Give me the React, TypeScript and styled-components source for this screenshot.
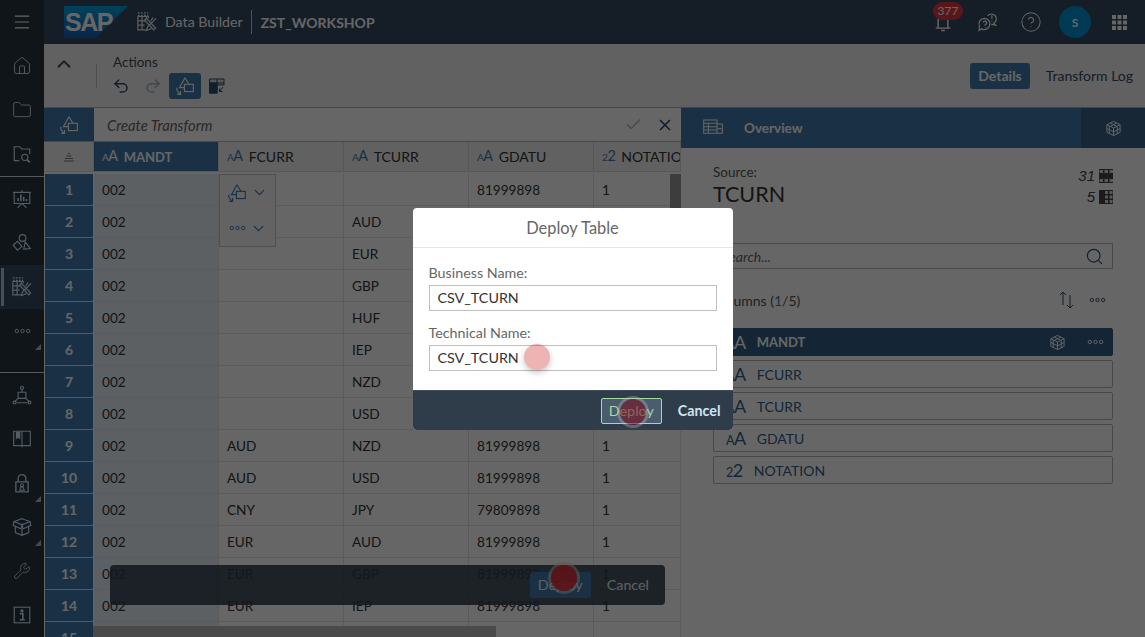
import { ReactNode } from "react";
import styled, { createGlobalStyle } from "styled-components";
import {
  Check,
  ChevronDown,
  ChevronUp,
  CircleHelp,
  Folder,
  Home,
  Menu,
  Redo2,
  Search,
  Undo2,
  Wrench,
  X,
} from "lucide-react";

const FONT = `Lato, "Noto Sans", "Liberation Sans", sans-serif`;

const GlobalStyle = createGlobalStyle`
  html, body {
    margin: 0;
    height: 100%;
    overflow: hidden;
    background: #fff;
    font-family: ${FONT};
    color: #333;
  }
  * { box-sizing: border-box; }
`;

const Page = styled.div`
  position: relative;
  width: 1145px;
  height: 637px;
  overflow: hidden;
  display: flex;
  flex-direction: column;
`;

/* shell header */
const ShellBar = styled.header`
  height: 44px;
  flex: none;
  display: flex;
  align-items: center;
  background: #354a5f;
  color: #fff;
`;

const ShellMenu = styled.div`
  width: 44px;
  height: 44px;
  flex: none;
  display: flex;
  align-items: center;
  justify-content: center;
  background: #27363f;
  color: #fff;
`;

const Logo = styled.svg`
  margin-left: 20px;
  flex: none;
`;

const AppGlyph = styled.span`
  margin-left: 8px;
  display: flex;
  color: #e4ecf3;
`;

const AppName = styled.span`
  font-size: 14.2px;
  margin-left: 7px;
  padding-right: 8px;
  height: 24px;
  line-height: 24px;
  border-right: 1px solid #c9d2da;
  color: #fff;
`;

const SpaceName = styled.span`
  font-size: 14px;
  font-weight: 700;
  margin-left: 9px;
`;

const ShellActions = styled.div`
  margin-left: auto;
  margin-right: 4px;
  display: flex;
  align-items: center;
`;

const ShellIcon = styled.div`
  position: relative;
  width: 44px;
  height: 44px;
  display: flex;
  align-items: center;
  justify-content: center;
`;

const Badge = styled.span`
  position: absolute;
  top: 2px;
  left: 12px;
  height: 18px;
  min-width: 30px;
  padding: 0 4px;
  border-radius: 9px;
  background: #e03a3f;
  color: #fff;
  font-size: 12px;
  line-height: 18px;
  text-align: center;
`;

const Avatar = styled.div`
  width: 32px;
  height: 32px;
  margin: 0 6px;
  border-radius: 50%;
  background: #0092d1;
  color: #fff;
  font-size: 12px;
  font-weight: 700;
  display: flex;
  align-items: center;
  justify-content: center;
`;

/* body */
const Body = styled.div`
  flex: 1;
  display: flex;
  min-height: 0;
`;

const SideNav = styled.nav`
  width: 44px;
  flex: none;
  display: flex;
  flex-direction: column;
  background: #27363f;
  color: #d1e8ff;
`;

const NavItem = styled.div<{ $active?: boolean; $more?: boolean }>`
  position: relative;
  height: 44px;
  flex: none;
  display: flex;
  align-items: center;
  justify-content: center;
  background: ${(p) => (p.$active ? "#354a5f" : "transparent")};
  ${(p) =>
    p.$active
      ? `&::before {
          content: "";
          position: absolute;
          left: 1px;
          top: 3px;
          bottom: 3px;
          width: 3px;
          background: #b9c4cf;
        }`
      : ""}
  ${(p) =>
    p.$more
      ? `&::after {
          content: "";
          position: absolute;
          right: 3px;
          bottom: 3px;
          border-style: solid;
          border-width: 0 0 6px 6px;
          border-color: transparent transparent #aebcc7 transparent;
        }`
      : ""}
`;

const NavDivider = styled.div<{ $gap?: number }>`
  height: 1px;
  flex: none;
  margin-top: ${(p) => p.$gap ?? 0}px;
  background: #d8dee3;
`;

const Workspace = styled.main`
  flex: 1;
  display: flex;
  flex-direction: column;
  min-width: 0;
  background: #fff;
`;

const Toolbar = styled.div`
  height: 64px;
  flex: none;
  display: flex;
  align-items: flex-start;
  background: #f2f2f2;
  border-bottom: 1px solid #b4b4b4;
`;

const Collapse = styled.div`
  width: 40px;
  height: 40px;
  display: flex;
  align-items: center;
  justify-content: center;
  color: #354a5f;
`;

const ToolSep = styled.div`
  width: 1px;
  height: 24px;
  margin: 20px 16px 0 12px;
  background: #c5c5c5;
`;

const ToolGroup = styled.div`
  display: flex;
  flex-direction: column;
  padding-top: 10px;
`;

const ToolLabel = styled.span`
  font-size: 13.5px;
  line-height: 16px;
  color: #4a4a4a;
`;

const ToolButtons = styled.div`
  display: flex;
  align-items: center;
  margin-left: -8px;
  margin-top: 3px;
`;

const ToolButton = styled.div<{ $on?: boolean; $off?: boolean }>`
  width: 32px;
  height: 26px;
  display: flex;
  align-items: center;
  justify-content: center;
  border-radius: 3px;
  background: ${(p) => (p.$on ? "#427cac" : "transparent")};
  color: ${(p) => (p.$on ? "#fff" : p.$off ? "#9fb2c2" : "#2c4e6c")};
`;

const ViewTabs = styled.div`
  margin-left: auto;
  margin-top: 19px;
  margin-right: 12px;
  display: flex;
  align-items: center;
  gap: 16px;
`;

const ViewTab = styled.span<{ $on?: boolean }>`
  height: 26px;
  line-height: 26px;
  font-size: 14px;
  padding: ${(p) => (p.$on ? "0 8px" : "0")};
  border-radius: 3px;
  background: ${(p) => (p.$on ? "#427cac" : "transparent")};
  color: ${(p) => (p.$on ? "#fff" : "#354a5f")};
  font-weight: ${(p) => (p.$on ? 700 : 400)};
`;

const Split = styled.div`
  flex: 1;
  display: flex;
  min-height: 0;
`;

const LeftPane = styled.section`
  position: relative;
  width: 637px;
  flex: none;
  display: flex;
  flex-direction: column;
  overflow: hidden;
`;

const TransformBar = styled.div`
  height: 34px;
  flex: none;
  display: flex;
  align-items: center;
  background: #fff;
  border-bottom: 1px solid #b4b4b4;
`;

const TransformIcon = styled.div`
  width: 50px;
  height: 33px;
  flex: none;
  display: flex;
  align-items: center;
  justify-content: center;
  background: #427cac;
  color: #fff;
`;

const TransformInput = styled.span`
  flex: 1;
  padding-left: 13px;
  font-size: 14.8px;
  font-style: italic;
  color: #666;
`;

const BarAction = styled.span<{ $muted?: boolean }>`
  width: 32px;
  display: flex;
  justify-content: center;
  color: ${(p) => (p.$muted ? "#a9bccb" : "#2c4e6c")};
`;

const Grid = styled.div`
  flex: 1;
  display: grid;
  grid-template-columns: 50px 125px 125px 125px 125px 87px;
  grid-auto-rows: 32px;
  align-content: start;
  overflow: hidden;
  background: #fff;
`;

const HeadCell = styled.div<{ $on?: boolean }>`
  height: 30px;
  display: flex;
  align-items: center;
  gap: 6px;
  padding-left: 8px;
  white-space: nowrap;
  overflow: hidden;
  font-size: ${(p) => (p.$on ? 13 : 14)}px;
  border-right: 1px solid #d9d9d9;
  border-bottom: 1px solid #d9d9d9;
  background: ${(p) => (p.$on ? "#427cac" : "#f2f2f2")};
  color: ${(p) => (p.$on ? "#fff" : "#333")};
  font-weight: ${(p) => (p.$on ? 700 : 400)};
`;

const CornerCell = styled(HeadCell)`
  justify-content: center;
  padding-left: 0;
  color: #777;
`;

const RowNo = styled.div`
  display: flex;
  align-items: center;
  justify-content: center;
  margin-left: 1px;
  margin-right: 1px;
  font-size: 14px;
  font-weight: 700;
  background: #427cac;
  color: #fff;
  border-bottom: 1px solid #d4e0ea;
`;

const Cell = styled.div<{ $on?: boolean }>`
  display: flex;
  align-items: center;
  padding-left: 8px;
  font-size: 13.6px;
  color: #333;
  border-right: 1px solid #e3e3e3;
  border-bottom: 1px solid #e3e3e3;
  background: ${(p) => (p.$on ? "#e5f0f8" : "#fff")};
`;

const TypeMark = styled.span<{ $size?: number }>`
  display: inline-flex;
  align-items: baseline;
  font-weight: 400;
  font-size: ${(p) => p.$size ?? 14.5}px;
  line-height: 1;
  color: inherit;
  letter-spacing: -0.5px;
  & small {
    font-size: 0.7em;
  }
`;

const HeadMark = styled(TypeMark)`
  color: #427cac;
`;

const ColumnMenu = styled.div`
  position: absolute;
  left: 175px;
  top: 66px;
  width: 57px;
  height: 73px;
  display: flex;
  flex-direction: column;
  background: #f7f7f7;
  border: 1px solid #c9c9c9;
  color: #427cac;
`;

const ColumnMenuRow = styled.div`
  flex: 1;
  display: flex;
  align-items: center;
  justify-content: center;
  gap: 4px;
`;

const VScroll = styled.div`
  position: absolute;
  right: 0;
  top: 66px;
  width: 11px;
  height: 90px;
  background: #9a9a9a;
`;

const HScroll = styled.div`
  position: absolute;
  left: 49px;
  bottom: 0;
  width: 403px;
  height: 11px;
  background: #b8b8b8;
`;

/* details panel */
const RightPane = styled.aside`
  flex: 1;
  display: flex;
  flex-direction: column;
  min-width: 0;
  background: #fff;
  box-shadow: -1px 0 3px rgba(0, 0, 0, 0.12);
`;

const PanelHead = styled.div`
  height: 40px;
  flex: none;
  display: flex;
  align-items: center;
  background: #427cac;
  color: #fff;
  padding-left: 20px;
  font-size: 13.5px;
  font-weight: 700;
  gap: 19px;
`;

const PanelTab = styled.div`
  margin-left: auto;
  width: 64px;
  height: 40px;
  background: #3c6186;
  display: flex;
  align-items: center;
  justify-content: center;
`;

const PanelBody = styled.div`
  padding: 16px 32px 0 32px;
  display: flex;
  flex-direction: column;
`;

const SourceRow = styled.div`
  display: flex;
  justify-content: space-between;
`;

const SourceLabel = styled.div`
  font-size: 13.5px;
  line-height: 17px;
  color: #555;
`;

const SourceName = styled.div`
  font-size: 21.5px;
  line-height: 26px;
  color: #333;
`;

const Counts = styled.div`
  display: flex;
  flex-direction: column;
  align-items: flex-end;
  padding-top: 4px;
  gap: 5px;
`;

const Count = styled.div`
  display: flex;
  align-items: center;
  gap: 4px;
  font-size: 15px;
  line-height: 16px;
  font-style: italic;
  color: #444;
  font-family: "Liberation Sans", sans-serif;
`;

const SearchBox = styled.div`
  margin-top: 36px;
  height: 26px;
  display: flex;
  align-items: center;
  justify-content: space-between;
  padding: 0 8px;
  border: 1px solid #b4b4b4;
  background: #fff;
  font-size: 14px;
  font-style: italic;
  color: #666;
  & svg {
    color: #2c4e6c;
  }
`;

const ColumnsHead = styled.div`
  margin-top: 20px;
  height: 22px;
  display: flex;
  align-items: center;
  font-size: 14px;
  color: #555;
`;

const ColumnsCount = styled.span`
  color: #427cac;
`;

const ColumnsActions = styled.div`
  margin-left: auto;
  display: flex;
  align-items: center;
  gap: 13px;
  padding-right: 7px;
  color: #354a5f;
`;

const ColumnList = styled.div`
  margin-top: 17px;
  display: flex;
  flex-direction: column;
  gap: 4px;
`;

const ColumnRow = styled.div<{ $on?: boolean }>`
  height: 28px;
  display: flex;
  align-items: center;
  gap: 11px;
  padding: 0 8px 0 12px;
  border-radius: 2px;
  font-size: ${(p) => (p.$on ? 13 : 14)}px;
  font-weight: ${(p) => (p.$on ? 700 : 400)};
  border: 1px solid ${(p) => (p.$on ? "#345f87" : "#b4b4b4")};
  background: ${(p) => (p.$on ? "#345f87" : "#fff")};
  color: ${(p) => (p.$on ? "#fff" : "#345f87")};
`;

const RowIcons = styled.div`
  margin-left: auto;
  display: flex;
  align-items: center;
  gap: 21px;
`;

/* bar behind the dim layer */
const DeployBar = styled.div`
  position: absolute;
  left: 110px;
  top: 565px;
  width: 555px;
  height: 40px;
  padding-right: 9px;
  border-radius: 4px;
  display: flex;
  align-items: center;
  justify-content: flex-end;
  gap: 9px;
  background: rgba(45, 62, 74, 0.88);
  color: #eaf1f7;
  font-size: 14.3px;
`;

const BarButton = styled.span<{ $primary?: boolean }>`
  height: 26px;
  line-height: 26px;
  padding: 0 ${(p) => (p.$primary ? 8 : 7)}px;
  border-radius: 3px;
  background: ${(p) => (p.$primary ? "#427cac" : "transparent")};
`;

const Dim = styled.div`
  position: absolute;
  inset: 0;
  background: rgba(0, 0, 0, 0.6);
  display: flex;
  align-items: center;
  justify-content: center;
`;

const Dialog = styled.div`
  width: 320px;
  height: 222px;
  margin-top: 1px;
  border-radius: 4px;
  overflow: hidden;
  display: flex;
  flex-direction: column;
  background: #fff;
`;

const DialogTitle = styled.div`
  height: 40px;
  flex: none;
  line-height: 39px;
  text-align: center;
  font-size: 16.4px;
  color: #666;
  border-bottom: 1px solid #e5e5e5;
`;

const DialogBody = styled.div`
  flex: 1;
  padding: 16px 16px 0;
  display: flex;
  flex-direction: column;
`;

const FieldLabel = styled.label`
  font-size: 14.3px;
  line-height: 17px;
  color: #666;
`;

const FieldInput = styled.div`
  height: 26px;
  margin: 4px 0 13px;
  padding-left: 8px;
  line-height: 24px;
  font-size: 14.3px;
  color: #333;
  border: 1px solid #bfbfbf;
`;

const DialogFooter = styled.div`
  height: 40px;
  flex: none;
  display: flex;
  align-items: center;
  justify-content: flex-end;
  gap: 15px;
  padding-right: 11px;
  background: #2f3c4a;
  border-top: 1px solid #3d4d5c;
`;

const FooterButton = styled.span<{ $focus?: boolean }>`
  height: 26px;
  line-height: 24px;
  font-size: 14.3px;
  padding: 0 ${(p) => (p.$focus ? "7px" : "0")};
  border-radius: 2px;
  border: 1px solid ${(p) => (p.$focus ? "#a6dba0" : "transparent")};
  background: ${(p) => (p.$focus ? "#4a5d6e" : "transparent")};
  color: ${(p) => (p.$focus ? "#a8d89c" : "#cfe3f4")};
  font-weight: ${(p) => (p.$focus ? 400 : 700)};
`;

const ClickDot = styled.div<{ $x: number; $y: number; $ring?: boolean; $pale?: boolean }>`
  position: absolute;
  left: ${(p) => p.$x - 13}px;
  top: ${(p) => p.$y - 13}px;
  width: 26px;
  height: 26px;
  border-radius: 50%;
  background: ${(p) => (p.$pale ? "rgba(205, 40, 40, 0.35)" : "rgba(125, 10, 30, 0.55)")};
  box-shadow: ${(p) =>
    p.$ring ? "0 0 0 3px rgba(190, 190, 190, 0.35)" : "0 3px 6px rgba(0, 0, 0, 0.22)"};
`;

const BarDot = styled(ClickDot)`
  background: rgba(235, 45, 55, 0.9);
  box-shadow: 0 0 0 3px rgba(220, 220, 220, 0.55);
`;

/* drawn icons */
const Svg = ({ size = 18, children }: { size?: number; children: ReactNode }) => (
  <svg
    width={size}
    height={size}
    viewBox="0 0 18 18"
    fill="none"
    stroke="currentColor"
    strokeWidth="1"
  >
    {children}
  </svg>
);

const TransformGlyph = ({ size = 18 }: { size?: number }) => (
  <Svg size={size}>
    <path d="M9 1.5 L4 10.5 H8.5 M9 1.5 L12.5 7.5" />
    <rect x="8.5" y="7.5" width="8" height="6.5" />
    <path d="M1.5 10.5 C1.5 13.5 2.5 15 5 16 M5 13.5 V16.5 H2" />
  </Svg>
);

const Dots = ({ width = 18 }: { width?: number }) => (
  <svg width={width} height="6" viewBox="0 0 18 6" fill="none" stroke="currentColor">
    <circle cx="3" cy="3" r="1.8" />
    <circle cx="9" cy="3" r="1.8" />
    <circle cx="15" cy="3" r="1.8" />
  </svg>
);

const Cube = ({ size = 16 }: { size?: number }) => (
  <Svg size={size}>
    <path d="M9 1.5 L16 5 V13 L9 16.5 L2 13 V5 Z" />
    <path d="M2 5 L9 8.5 L16 5 M9 8.5 V16.5" />
    <path d="M5.5 3.2 L12.5 6.8 M12.5 3.2 L5.5 6.8 M4.5 6.5 V14.5 M2 9 L9 12.5 L16 9 M13 7 V15" />
  </Svg>
);

const DataBuilderGlyph = ({ size = 22 }: { size?: number }) => (
  <Svg size={size}>
    <path d="M1.5 1.5 H10 M1.5 3.5 H10" strokeDasharray="1.5 1" />
    <path d="M1.5 4.5 H10 V6 M1.5 4.5 V15.5 H8 M1.5 8 H8 M1.5 11.5 H7 M5 4.5 V15.5 M8.5 4.5 V7" />
    <path d="M8.5 6 L16 14 L14.5 15.5 L7 7.5 Z" />
    <path d="M16.5 6 L9.5 13 L8.5 16 L11.5 15 L12.5 14 M12 8 L14 5.5" />
  </Svg>
);

const CountGrid = ({ dark }: { dark: "row" | "col" }) => (
  <svg width="14" height="14" viewBox="0 0 14 14">
    <rect width="14" height="14" fill="#444" />
    {dark === "row"
      ? [0, 5, 10].map((x) =>
          [1, 10].map((y) => <rect key={`${x}-${y}`} x={x + 0.5} y={y} width="3.5" height="3" fill="#ddd" />),
        )
      : [6, 10.5].map((x) =>
          [1, 5.5, 10].map((y) => <rect key={`${x}-${y}`} x={x} y={y} width="3" height="3" fill="#ddd" />),
        )}
  </svg>
);

const AaMark = ({ value = "A" }: { value?: string }) => (
  <>
    <small>{value}</small>
    {value}
  </>
);

const NAV_TOP: ReactNode[] = [
  <Home key="home" size={20} strokeWidth={1.1} />,
  <Folder key="folder" size={20} strokeWidth={1.1} />,
  <Svg key="search" size={20}>
    <path d="M6.5 15 H2 V2.5 H7 L8.5 4.5 H16 V9" />
    <circle cx="11.5" cy="12" r="2.8" />
    <path d="M13.5 14 L16 16.5" strokeWidth="1.5" />
  </Svg>,
  null,
  <Svg key="story" size={20}>
    <path d="M2 3 H16 V13 H2 Z M1 3 H17 M9 1 V3 M9 13 L5 17 M9 13 L13 17" />
    <path d="M5.5 11 V8 M8 11 V5 M10.5 11 V7 M13 11 V9" strokeWidth="1.4" />
  </Svg>,
  <Svg key="shapes" size={20}>
    <circle cx="9.5" cy="4.5" r="3" />
    <path d="M1 11 L5 7.5 L9 12 L5 15.5 Z M12 8 L16.5 14 L10.5 14.5 Z" />
  </Svg>,
];

const NAV_BOTTOM: { key: string; icon: ReactNode; more?: boolean }[] = [
  {
    key: "network",
    icon: (
      <Svg size={20}>
        <circle cx="9" cy="2.5" r="1.4" />
        <path d="M9 4 V6 M5.5 6.5 H12.5 V12 H5.5 Z M5.5 12 L2.5 15 M12.5 12 L15.5 15 M4 16 H14" />
        <circle cx="2.3" cy="15.8" r="1.3" />
        <circle cx="15.7" cy="15.8" r="1.3" />
      </Svg>
    ),
  },
  {
    key: "book",
    icon: (
      <Svg size={20}>
        <path d="M1.5 2 H16.5 V15 H1.5 Z M9 2 V16.5" />
        <path d="M4 3 V8.5 L5.5 7.3 L7 8.5 V3 Z" fill="currentColor" />
      </Svg>
    ),
  },
  {
    key: "lock",
    more: true,
    icon: (
      <Svg size={20}>
        <path d="M3.5 8 H14.5 V17 H3.5 Z M5.5 8 V5 A3.5 3.5 0 0 1 12.5 5 V8" strokeWidth="1.2" />
        <circle cx="9" cy="11" r="1.3" />
        <path d="M7 15.5 L8.2 12.5 H9.8 L11 15.5 Z" />
      </Svg>
    ),
  },
  {
    key: "package",
    more: true,
    icon: (
      <Svg size={20}>
        <path d="M9 1.5 L16 4 L9 7 L2 4 Z M2 4 L1 7.5 L8 10.5 L9 7 L10 10.5 L17 7.5 L16 4" />
        <path d="M3 8.5 V14 L9 16.5 L15 14 V8.5 M9 10 V16.5" />
      </Svg>
    ),
  },
  { key: "tools", icon: <Wrench size={18} strokeWidth={1.1} /> },
  {
    key: "info",
    icon: (
      <Svg size={20}>
        <rect x="2" y="2" width="14" height="14" />
        <circle cx="9" cy="5.3" r="1" fill="currentColor" />
        <path d="M7 7.8 H9.8 V13 M7 13.2 H11.5" strokeWidth="1.4" />
      </Svg>
    ),
  },
];

const ROWS: string[][] = [
  ["", "", "81999898", "1"],
  ["", "AUD", "", ""],
  ["", "EUR", "", ""],
  ["", "GBP", "", ""],
  ["", "HUF", "", ""],
  ["", "IEP", "", ""],
  ["", "NZD", "", ""],
  ["", "USD", "", ""],
  ["AUD", "NZD", "81999898", "1"],
  ["AUD", "USD", "81999898", "1"],
  ["CNY", "JPY", "79809898", "1"],
  ["EUR", "AUD", "81999898", "1"],
  ["EUR", "GBP", "81999898", "1"],
  ["EUR", "IEP", "81999898", "1"],
  ["", "", "", ""],
];

const COLUMNS = ["MANDT", "FCURR", "TCURR", "GDATU", "NOTATION"];

export default function App() {
  return (
    <>
      <GlobalStyle />
      <Page>
        <ShellBar>
          <ShellMenu>
            <Menu size={20} strokeWidth={1.4} />
          </ShellMenu>
          <Logo width="64" height="32" viewBox="0 0 64 32">
            <defs>
              <linearGradient id="sap" x1="0" y1="0" x2="0" y2="1">
                <stop offset="0" stopColor="#00a5e0" />
                <stop offset="1" stopColor="#1a5fb4" />
              </linearGradient>
            </defs>
            <polygon points="0,0 64,0 32,32 0,32" fill="url(#sap)" />
            <text
              x="1"
              y="25"
              fill="#fff"
              fontFamily="Liberation Sans, sans-serif"
              fontWeight="700"
              fontSize="25"
              letterSpacing="-1.5"
            >
              SAP
            </text>
          </Logo>
          <AppGlyph>
            <DataBuilderGlyph size={22} />
          </AppGlyph>
          <AppName>Data Builder</AppName>
          <SpaceName>ZST_WORKSHOP</SpaceName>
          <ShellActions>
            <ShellIcon>
              <Svg size={22}>
                <path d="M3 14 H15 M5 14 V8 A4 4 0 0 1 13 8 V14 M7.5 16 H10.5" strokeWidth="1.2" />
              </Svg>
              <Badge>377</Badge>
            </ShellIcon>
            <ShellIcon>
              <Svg size={22}>
                <path d="M7 6 A4.6 4.6 0 1 1 4.5 14.6 L2.5 16 L2.8 12.5 A4.6 4.6 0 0 1 7 6 Z" />
                <path d="M9.5 4 A4 4 0 1 1 14.5 10 L16 11.5 L12.5 11" />
                <path d="M13 3.5 V6.5 M13 8 V8.5" />
                <path d="M6 9.5 A1.4 1.4 0 1 1 7.5 11 V12 M7.5 13 V13.5" />
              </Svg>
            </ShellIcon>
            <ShellIcon>
              <CircleHelp size={22} strokeWidth={1.1} />
            </ShellIcon>
            <Avatar>S</Avatar>
            <ShellIcon>
              <svg width="15" height="15" viewBox="0 0 15 15" fill="#fff">
                {[0, 5.5, 11].map((x) =>
                  [0, 5.5, 11].map((y) => <rect key={`${x}-${y}`} x={x} y={y} width="4" height="4" />),
                )}
              </svg>
            </ShellIcon>
          </ShellActions>
        </ShellBar>

        <Body>
          <SideNav>
            {NAV_TOP.map((icon, i) =>
              icon ? <NavItem key={i}>{icon}</NavItem> : <NavDivider key={i} />,
            )}
            <NavItem $active>
              <DataBuilderGlyph size={22} />
            </NavItem>
            <NavItem $more>
              <Dots width={17} />
            </NavItem>
            <NavDivider $gap={19} />
            {NAV_BOTTOM.map((item) => (
              <NavItem key={item.key} $more={item.more}>
                {item.icon}
              </NavItem>
            ))}
          </SideNav>

          <Workspace>
            <Toolbar>
              <Collapse>
                <ChevronUp size={22} strokeWidth={2} />
              </Collapse>
              <ToolSep />
              <ToolGroup>
                <ToolLabel>Actions</ToolLabel>
                <ToolButtons>
                  <ToolButton>
                    <Undo2 size={18} strokeWidth={2} />
                  </ToolButton>
                  <ToolButton $off>
                    <Redo2 size={18} strokeWidth={2} />
                  </ToolButton>
                  <ToolButton $on>
                    <TransformGlyph size={20} />
                  </ToolButton>
                  <ToolButton>
                    <Svg size={18}>
                      <path d="M1.5 2 H16 V8 H9 V16 H1.5 Z" fill="currentColor" fillOpacity="0.15" />
                      <path d="M1.5 6 H16 M9 2 V8" />
                      <rect x="1.5" y="6" width="7.5" height="10" fill="currentColor" />
                      <path d="M15 10 L11.5 14.5 M11.5 11.5 V14.5 H14.5" />
                    </Svg>
                  </ToolButton>
                </ToolButtons>
              </ToolGroup>
              <ViewTabs>
                <ViewTab $on>Details</ViewTab>
                <ViewTab>Transform Log</ViewTab>
              </ViewTabs>
            </Toolbar>

            <Split>
              <LeftPane>
                <TransformBar>
                  <TransformIcon>
                    <TransformGlyph size={20} />
                  </TransformIcon>
                  <TransformInput>Create Transform</TransformInput>
                  <BarAction $muted>
                    <Check size={19} strokeWidth={1.8} />
                  </BarAction>
                  <BarAction>
                    <X size={18} strokeWidth={2.2} />
                  </BarAction>
                </TransformBar>
                <Grid>
                  <CornerCell>
                    <svg width="12" height="10" viewBox="0 0 12 10" stroke="currentColor">
                      <path d="M5 1.5 H7 M3.5 4 H8.5 M2 6.5 H10 M1 9 H11" />
                    </svg>
                  </CornerCell>
                  {COLUMNS.map((name, i) => (
                    <HeadCell key={name} $on={i === 0}>
                      {i === 0 ? (
                        <TypeMark>
                          <AaMark />
                        </TypeMark>
                      ) : (
                        <HeadMark>
                          <AaMark value={name === "NOTATION" ? "2" : "A"} />
                        </HeadMark>
                      )}
                      {name}
                    </HeadCell>
                  ))}
                  {ROWS.map((row, i) => (
                    <Row key={i} index={i + 1} values={row} />
                  ))}
                </Grid>
                <ColumnMenu>
                  <ColumnMenuRow>
                    <TransformGlyph size={20} />
                    <ChevronDown size={17} strokeWidth={1.8} />
                  </ColumnMenuRow>
                  <ColumnMenuRow>
                    <Dots width={17} />
                    <ChevronDown size={17} strokeWidth={1.8} />
                  </ColumnMenuRow>
                </ColumnMenu>
                <VScroll />
                <HScroll />
              </LeftPane>

              <RightPane>
                <PanelHead>
                  <Svg size={24}>
                    <path d="M2 3 H12 V5.5 H2 Z M2 5.5 V13 H12 V5.5 M2 8 H12 M2 10.5 H12 M5.5 5.5 V13" strokeWidth="0.8" />
                    <path d="M12 6 H16 V13 H12 M12 9.5 H16" strokeWidth="0.8" />
                  </Svg>
                  Overview
                  <PanelTab>
                    <Cube size={17} />
                  </PanelTab>
                </PanelHead>
                <PanelBody>
                  <SourceRow>
                    <div>
                      <SourceLabel>Source:</SourceLabel>
                      <SourceName>TCURN</SourceName>
                    </div>
                    <Counts>
                      <Count>
                        31 <CountGrid dark="row" />
                      </Count>
                      <Count>
                        5 <CountGrid dark="col" />
                      </Count>
                    </Counts>
                  </SourceRow>
                  <SearchBox>
                    Search...
                    <Search size={19} strokeWidth={1.5} />
                  </SearchBox>
                  <ColumnsHead>
                    Columns (<ColumnsCount>1</ColumnsCount>/5)
                    <ColumnsActions>
                      <svg width="18" height="18" viewBox="0 0 18 18" fill="none" stroke="currentColor">
                        <path d="M5 14 V1 M2 4 L5 1 L8 4 M12 4 V17 M9 14 L12 17 L15 14" />
                      </svg>
                      <Dots width={17} />
                    </ColumnsActions>
                  </ColumnsHead>
                  <ColumnList>
                    {COLUMNS.map((name, i) => (
                      <ColumnRow key={name} $on={i === 0}>
                        <TypeMark $size={18}>
                          <AaMark value={name === "NOTATION" ? "2" : "A"} />
                        </TypeMark>
                        {name}
                        {i === 0 && (
                          <RowIcons>
                            <Cube size={17} />
                            <Dots width={17} />
                          </RowIcons>
                        )}
                      </ColumnRow>
                    ))}
                  </ColumnList>
                </PanelBody>
              </RightPane>
            </Split>
          </Workspace>
        </Body>

        <DeployBar>
          <BarButton $primary>Deploy</BarButton>
          <BarButton>Cancel</BarButton>
        </DeployBar>
        <BarDot $x={564} $y={578} />

        <Dim>
          <Dialog>
            <DialogTitle>Deploy Table</DialogTitle>
            <DialogBody>
              <FieldLabel>Business Name:</FieldLabel>
              <FieldInput>CSV_TCURN</FieldInput>
              <FieldLabel>Technical Name:</FieldLabel>
              <FieldInput>CSV_TCURN</FieldInput>
            </DialogBody>
            <DialogFooter>
              <FooterButton $focus>Deploy</FooterButton>
              <FooterButton>Cancel</FooterButton>
            </DialogFooter>
          </Dialog>
        </Dim>
        <ClickDot $x={537} $y={357} $pale />
        <ClickDot $x={633} $y={412} $ring />
      </Page>
    </>
  );
}

function Row({ index, values }: { index: number; values: string[] }) {
  return (
    <>
      <RowNo>{index}</RowNo>
      <Cell $on>002</Cell>
      {values.map((value, i) => (
        <Cell key={i}>{value}</Cell>
      ))}
    </>
  );
}
